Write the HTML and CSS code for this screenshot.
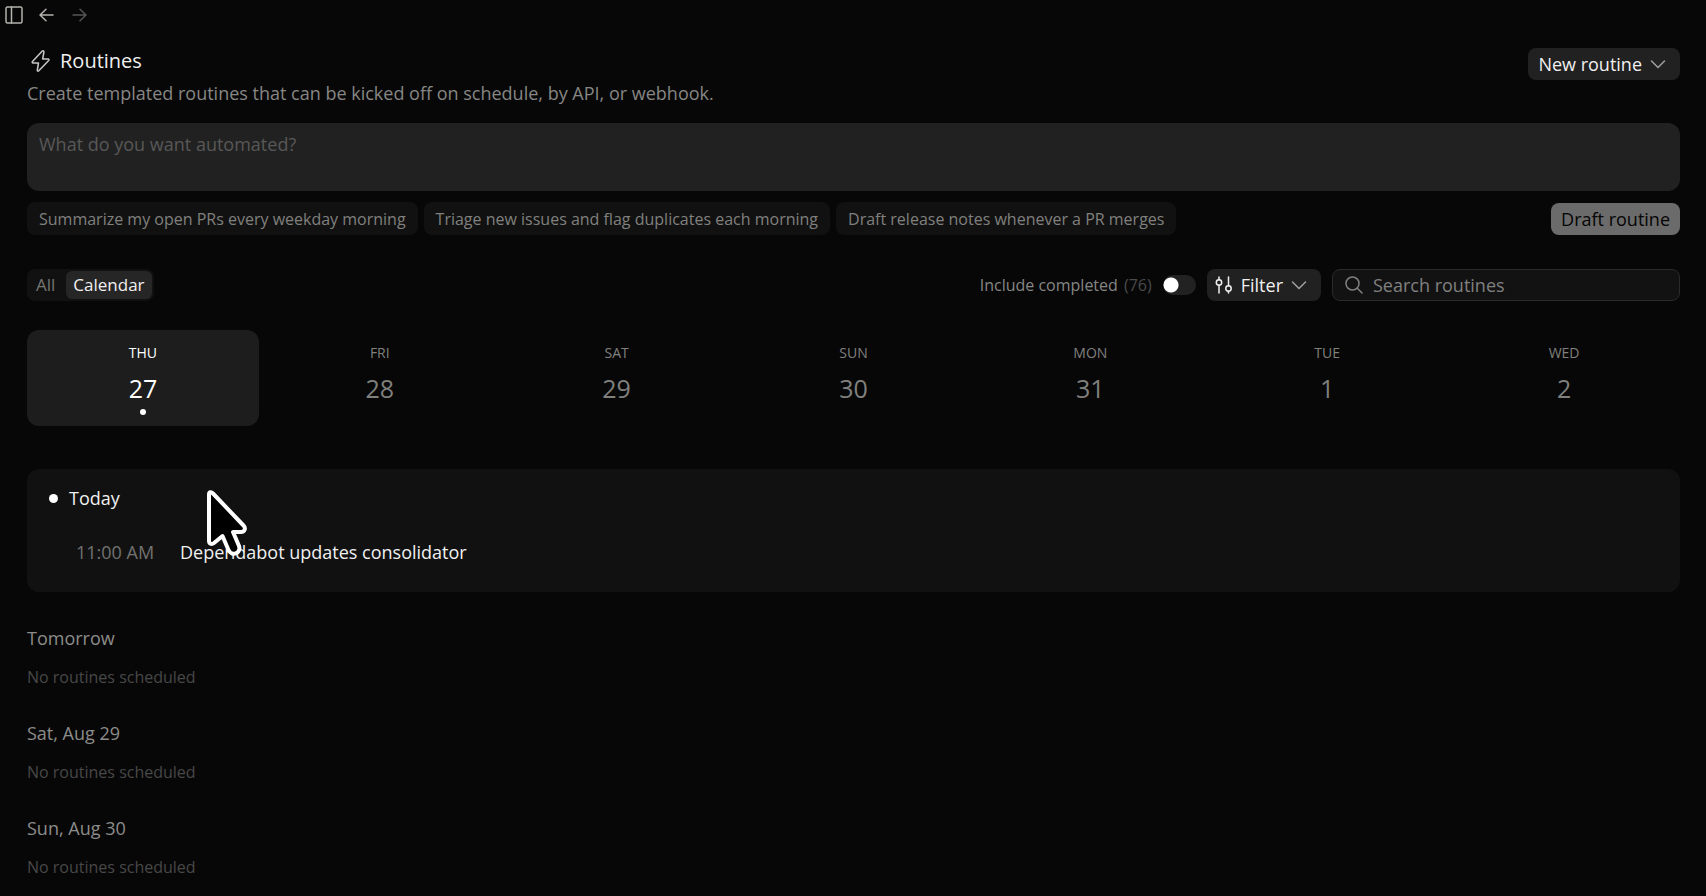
FILE: index.html
```html
<!DOCTYPE html>
<html lang="en">
<head>
    <meta charset="utf-8">
    <title>Routines</title>
    <meta name="viewport" content="width=device-width, initial-scale=1">
    <link rel="stylesheet" href="styles.css">
</head>
<body>

<nav class="topbar">
    <button type="button" class="icon-button" aria-label="Toggle sidebar">
        <svg width="18" height="18" viewBox="0 0 18 18"><rect x="1" y="1" width="16" height="16" rx="1.5"/><path d="M6.5 1v16"/></svg>
    </button>
    <button type="button" class="icon-button" aria-label="Back">
        <svg width="18" height="18" viewBox="0 0 18 18"><path d="M15 9H2M8 3.2 2 9l6 5.8"/></svg>
    </button>
    <button type="button" class="icon-button" aria-label="Forward" disabled>
        <svg width="18" height="18" viewBox="0 0 18 18"><path d="M2 9h13M9 3.2 15 9l-6 5.8"/></svg>
    </button>
</nav>

<main class="page">
    <header class="page-header">
        <div>
            <h1 class="title">
                <svg width="22" height="24" viewBox="0 0 22 24"><path d="M12.3 2 2.5 12.6c-.6.7-.3 1.4.5 1.4h5.500l-1.200 7c-.1 1.200.7 1.500 1.500.8L18.700 11.400c.6-.7.3-1.400-.5-1.400H12.700l1.200-7c.1-1.200-.8-1.700-1.600-1z"/></svg>
                Routines
            </h1>
            <p class="subtitle">Create templated routines that can be kicked off on schedule, by API, or webhook.</p>
        </div>
        <button type="button" class="button">
            New routine
            <svg class="chevron" width="16" height="16" viewBox="0 0 16 16"><path d="m1.5 5 6.500 6.500L14.500 5"/></svg>
        </button>
    </header>

    <form class="composer">
        <textarea class="prompt" aria-label="Describe a routine" placeholder="What do you want automated?"></textarea>
        <div class="suggestions">
            <button type="button" class="chip">Summarize my open PRs every weekday morning</button>
            <button type="button" class="chip">Triage new issues and flag duplicates each morning</button>
            <button type="button" class="chip">Draft release notes whenever a PR merges</button>
            <button type="submit" class="button button-draft">Draft routine</button>
        </div>
    </form>

    <div class="toolbar">
        <div class="tabs">
            <button type="button" class="tab">All</button>
            <button type="button" class="tab tab-active">Calendar</button>
        </div>
        <label class="completed" for="completed">Include completed <span class="count">(76)</span></label>
        <input type="checkbox" class="toggle" id="completed">
        <button type="button" class="button button-filter">
            <svg width="18" height="18" viewBox="0 0 18 18"><circle cx="4" cy="6.5" r="2.7"/><path d="M4 1v2.8M4 9.2V17M13.5 1v8.8M13.5 15.2V17"/><circle cx="13.5" cy="12.5" r="2.7"/></svg>
            Filter
            <svg class="chevron" width="16" height="16" viewBox="0 0 16 16"><path d="m1.5 5 6.500 6.500L14.500 5"/></svg>
        </button>
        <div class="search">
            <svg width="18" height="18" viewBox="0 0 18 18"><circle cx="7.5" cy="7.5" r="6.5"/><path d="m12.3 12.3 4.7 4.7"/></svg>
            <input type="search" class="search-input" aria-label="Search routines" placeholder="Search routines">
        </div>
    </div>

    <div class="week">
        <button type="button" class="day day-active"><span class="weekday">THU</span><span class="date">27</span></button>
        <button type="button" class="day"><span class="weekday">FRI</span><span class="date">28</span></button>
        <button type="button" class="day"><span class="weekday">SAT</span><span class="date">29</span></button>
        <button type="button" class="day"><span class="weekday">SUN</span><span class="date">30</span></button>
        <button type="button" class="day"><span class="weekday">MON</span><span class="date">31</span></button>
        <button type="button" class="day"><span class="weekday">TUE</span><span class="date">1</span></button>
        <button type="button" class="day"><span class="weekday">WED</span><span class="date">2</span></button>
    </div>

    <section class="today">
        <h2 class="today-title">Today</h2>
        <div class="event">
            <time class="event-time">11:00 AM</time>
            <span class="event-name">Dependabot updates consolidator</span>
        </div>
        <!-- mouse pointer -->
        <svg class="pointer" width="44" height="70" viewBox="0 0 44 70"><path d="M4 4.5v46c0 3.500 2.500 4.500 5 2.500l8.500-7 6 14c3 7 13 3.500 10.500-4L28 42h8c4 0 5-4 2.500-6.500L8 3.500C6 1.500 4 2 4 4.500z"/></svg>
    </section>

    <section class="upcoming">
        <h2 class="upcoming-title">Tomorrow</h2>
        <p class="empty">No routines scheduled</p>
    </section>
    <section class="upcoming">
        <h2 class="upcoming-title">Sat, Aug 29</h2>
        <p class="empty">No routines scheduled</p>
    </section>
    <section class="upcoming">
        <h2 class="upcoming-title">Sun, Aug 30</h2>
        <p class="empty">No routines scheduled</p>
    </section>
</main>

</body>
</html>
```
FILE: styles.css
```css
* {
    box-sizing: border-box;
}

body {
    font: 400 18px/24px "Open Sans", "Liberation Sans", sans-serif;
    background: #070707;
    color: #f0f0f0;
    margin: 0;
}

h1, h2, p {
    font-size: inherit;
    font-weight: 400;
    margin: 0;
}

button, input, textarea {
    font: inherit;
    color: inherit;
    background: none;
    border: 0;
    margin: 0;
    padding: 0;
}

svg {
    display: block;
    flex: none;
    fill: none;
    stroke: currentColor;
    stroke-width: 1.5;
    stroke-linecap: round;
    stroke-linejoin: round;
}

.topbar {
    display: flex;
    gap: 15px;
    height: 30px;
    padding: 0 5px;
    align-items: center;
}

.icon-button {
    color: #b5b3ae;
}

.icon-button:disabled {
    color: #555;
}

.page {
    padding: 18px 26px 0 27px;
}

.page-header {
    display: flex;
    justify-content: space-between;
    align-items: flex-start;
}

.title {
    display: flex;
    align-items: center;
    gap: 8px;
    font-size: 20px;
    line-height: 26px;
    padding-left: 3px;
}

.title svg {
    color: #c8c8c8;
}

.subtitle {
    color: #868684;
    padding: 7px 0 18px;
}

.button {
    display: flex;
    align-items: center;
    height: 32px;
    gap: 8px;
    padding: 0 14px 0 10px;
    border-radius: 8px;
    background: #212121;
}

.chevron {
    color: #a0a0a0;
}

.prompt {
    display: block;
    width: 100%;
    height: 68px;
    padding: 9px 12px;
    border-radius: 12px;
    background: #212121;
    resize: none;
    outline: none;
}

.prompt::placeholder {
    color: #585858;
}

.suggestions {
    display: flex;
    align-items: center;
    gap: 6px;
    padding-top: 11px;
}

.chip {
    height: 33px;
    padding: 0 12px;
    border-radius: 8px;
    background: #111;
    color: #80807e;
    font-size: 16px;
}

.button-draft {
    margin-left: auto;
    padding: 0 10px;
    background: #6b6b6b;
    color: #050505;
}

.toolbar {
    display: flex;
    align-items: center;
    gap: 11px;
    padding: 34px 0 29px;
}

.tabs {
    display: flex;
    gap: 4px;
    height: 32px;
    padding: 2px;
    margin-right: auto;
    border-radius: 8px;
    background: #111;
    font-size: 17px;
}

.tab {
    padding: 0 7px;
    border-radius: 6px;
    color: #757573;
}

.tab-active {
    background: #262626;
    color: #f0f0f0;
}

.completed {
    color: #868684;
    font-size: 16px;
}

.count {
    color: #4a4a4a;
    padding-left: 2px;
}

.toggle {
    appearance: none;
    width: 33px;
    height: 20px;
    border-radius: 10px;
    background: radial-gradient(circle at 8px 10px, #fff 7px, #222 8px);
}

.button-filter {
    padding-left: 8px;
}

.search {
    display: flex;
    align-items: center;
    gap: 10px;
    width: 348px;
    height: 32px;
    padding: 0 12px;
    border: 1px solid #2a2a2a;
    border-radius: 8px;
    background: #121212;
    color: #808080;
}

.search-input {
    flex: 1;
    min-width: 0;
    outline: none;
}

.search-input::placeholder {
    color: #808080;
}

.week {
    display: grid;
    grid-template-columns: repeat(7, 1fr);
    gap: 5px;
}

.day {
    display: flex;
    flex-direction: column;
    align-items: center;
    height: 96px;
    padding-top: 13px;
    border-radius: 12px;
    color: #80807e;
}

.day-active {
    background: #1d1d1d;
    color: #fff;
}

.weekday {
    font-size: 14px;
    line-height: 20px;
}

.date {
    font-size: 25px;
    line-height: 32px;
    padding-top: 9px;
}

.day-active::after,
.today-title::before {
    content: "";
    border-radius: 50%;
    background: #fff;
}

.day-active::after {
    width: 6px;
    height: 6px;
    margin-top: 5px;
}

.today {
    position: relative;
    margin: 43px 0 34px;
    padding: 17px 22px 28px;
    border-radius: 12px;
    background: #111;
}

.today-title {
    display: flex;
    align-items: center;
    gap: 11px;
}

.today-title::before {
    width: 9px;
    height: 9px;
}

.event {
    display: flex;
    gap: 22px;
    padding: 30px 0 0 27px;
}

.event-time {
    min-width: 82px;
    color: #727270;
}

.pointer {
    position: absolute;
    left: 178px;
    top: 21px;
    fill: #000;
    stroke: #fff;
    stroke-width: 4;
}

.upcoming {
    padding-bottom: 32px;
}

.upcoming-title {
    color: #8c8c8a;
}

.empty {
    color: #484848;
    padding-top: 15px;
    font-size: 16px;
}
```
